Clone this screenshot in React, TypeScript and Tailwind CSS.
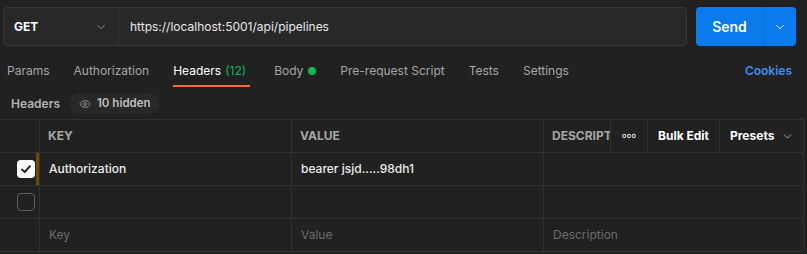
import { ChevronDown, Eye } from "lucide-react"

const line = "border-[#303030]"

function Check({ on }: { on: boolean }) {
  if (!on) return <div className="h-[18px] w-[18px] rounded-[4px] border-[1.5px] border-[#5e5e5e]" />
  return (
    <div className="flex h-[18px] w-[18px] items-center justify-center rounded-[4px] bg-white">
      <svg width="12" height="12" viewBox="0 0 12 12" fill="none">
        <path d="M2 6.4 4.7 9 10 3.2" stroke="#1c1c1c" strokeWidth="1.9" strokeLinecap="round" strokeLinejoin="round" />
      </svg>
    </div>
  )
}

function Row({ checked, bar, k, v, d, placeholder }: { checked?: boolean; bar?: boolean; k?: string; v?: string; d?: string; placeholder?: boolean }) {
  const txt = placeholder ? "text-[#6b6b6b] font-normal" : "text-[#ededed] font-medium"
  return (
    <div className={`flex h-[33px] border-b ${line}`}>
      <div className={`flex w-[40px] justify-end border-r ${line}`}>
        {checked !== undefined && (
          <div className="flex items-center pr-[1px]">
            <Check on={checked} />
          </div>
        )}
        <div className={`w-[3px] ${bar ? "bg-[#6e4b00]" : ""}`} />
      </div>
      <div className={`flex w-[252px] items-center border-r ${line} pl-[9px] text-[12px] ${txt}`}>{k}</div>
      <div className={`flex w-[252px] items-center border-r ${line} pl-[9px] text-[12px] ${txt}`}>{v}</div>
      <div className={`flex flex-1 items-center pl-[9px] text-[12px] ${txt}`}>{d}</div>
    </div>
  )
}

export default function App() {
  const tabs = ["Params", "Authorization"]
  const tabs2 = ["Pre-request Script", "Tests", "Settings"]
  return (
    <div className="h-[254px] w-[807px] overflow-hidden bg-[#212121] font-['Inter',sans-serif] text-[12px]">
      <div className="flex gap-[9px] pl-[3px] pt-[7px]">
        <div className="flex h-[39px] w-[684px] rounded-[4px] border border-[#363636] bg-[#282828]">
          <div className="flex w-[115px] items-center justify-between border-r border-[#363636] pl-[10px] pr-[10px]">
            <span className="text-[12px] font-bold text-white">GET</span>
            <ChevronDown size={14} strokeWidth={1.5} className="text-[#9a9a9a]" />
          </div>
          <div className="flex flex-1 items-center pl-[11px] text-[12px] text-[#e8e8e8]">https://localhost:5001/api/pipelines</div>
        </div>
        <div className="flex h-[39px] w-[100px] rounded-[4px] bg-[#097bed] text-white">
          <div className="flex w-[67px] items-center justify-center text-[14px] font-semibold">Send</div>
          <div className="w-px bg-[#0a6fd4]" />
          <div className="flex flex-1 items-center justify-center">
            <ChevronDown size={14} strokeWidth={1.5} />
          </div>
        </div>
      </div>

      <div className="mt-[10px] flex h-[31px] items-stretch pl-[7px] pr-[15px] text-[#a6a6a6]">
        <div className="flex gap-[24px]">
          {tabs.map((t) => (
            <div key={t} className="flex items-center pb-[2px]">{t}</div>
          ))}
          <div className="flex items-center border-b-2 border-[#ff6c37] pr-[4px] text-white">
            Headers <span className="ml-[4px] text-[#0cbb52]">(12)</span>
          </div>
          <div className="flex items-center pb-[2px]">
            Body <span className="ml-[5px] h-[8px] w-[8px] rounded-full bg-[#0cbb52]" />
          </div>
          {tabs2.map((t) => (
            <div key={t} className="flex items-center pb-[2px]">{t}</div>
          ))}
        </div>
        <div className="ml-auto flex items-center pb-[2px] font-semibold text-[#3f8ff3]">Cookies</div>
      </div>

      <div className="mt-[6px] flex h-[21px] items-center gap-[9px] pl-[11px]">
        <span className="font-semibold text-[#b3b3b3]">Headers</span>
        <div className="flex h-[21px] items-center gap-[6px] rounded-full bg-[#282828] pl-[10px] pr-[9px] text-[11.5px] font-semibold text-[#bdbdbd]">
          <Eye size={12} className="text-[#8a8a8a]" />
          10 hidden
        </div>
      </div>

      <div className={`mt-[5px] w-[804px] border-t border-r ${line}`}>
        <div className={`flex h-[33px] border-b ${line} text-[12px] font-bold text-[#a6a6a6]`}>
          <div className={`w-[40px] border-r ${line}`} />
          <div className={`flex w-[252px] items-center border-r ${line} pl-[8px]`}>KEY</div>
          <div className={`flex w-[252px] items-center border-r ${line} pl-[8px]`}>VALUE</div>
          <div className={`flex w-[67px] items-center overflow-hidden whitespace-nowrap border-r ${line} pl-[8px]`}>DESCRIPT</div>
          <div className={`flex w-[37px] items-center justify-center border-r ${line}`}>
            <svg width="14" height="6" viewBox="0 0 14 6" fill="none" stroke="#d0d0d0" strokeWidth="1.1">
              <circle cx="2.2" cy="3" r="1.6" />
              <circle cx="7" cy="3" r="1.6" />
              <circle cx="11.8" cy="3" r="1.6" />
            </svg>
          </div>
          <div className={`flex w-[72px] items-center justify-center border-r ${line} text-white`}>Bulk Edit</div>
          <div className="flex flex-1 items-center gap-[7px] pl-[10px] text-white">
            Presets <ChevronDown size={13} strokeWidth={1.5} className="text-[#c8c8c8]" />
          </div>
        </div>
        <Row checked bar k="Authorization" v="bearer jsjd.....98dh1" />
        <Row checked={false} />
        <Row placeholder k="Key" v="Value" d="Description" />
      </div>
    </div>
  )
}
